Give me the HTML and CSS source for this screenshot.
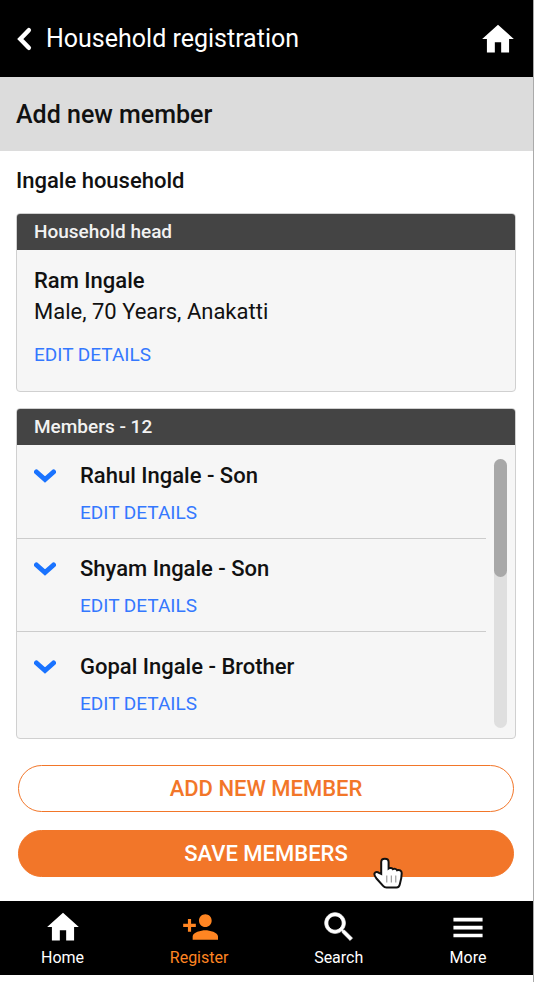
FILE: index.html
```html
<!DOCTYPE html>
<html lang="en">
<head>
<meta charset="utf-8">
<meta name="viewport" content="width=device-width, initial-scale=1">
<title>Household registration</title>
<link rel="stylesheet" href="styles.css">
</head>
<body>
<div class="app">
  <header class="topbar">
    <button class="icon-button" type="button" aria-label="Back">
      <svg class="back-icon" viewBox="0 0 16 24" aria-hidden="true"><path d="M12.800 3.200 4.300 12l8.500 8.800"/></svg>
    </button>
    <h1 class="topbar-title">Household registration</h1>
    <a class="icon-button" href="#home" aria-label="Home">
      <svg class="icon" viewBox="0 0 24 24" aria-hidden="true"><path d="M10 20.500v-6.500h4v6.500h5v-8.500h3L12 3 2 12h3v8.500z"/></svg>
    </a>
  </header>

  <div class="subheader"><h2 class="subheader-title">Add new member</h2></div>

  <main class="content">
    <h3 class="household">Ingale household</h3>

    <section class="card">
      <h4 class="card-header">Household head</h4>
      <div class="head-body">
        <p class="name">Ram Ingale</p>
        <p class="details">Male, 70 Years, Anakatti</p>
        <a class="edit" href="#edit-head">EDIT DETAILS</a>
      </div>
    </section>

    <section class="card">
      <h4 class="card-header">Members - 12</h4>
      <div class="members-body">
        <ul class="members">
          <li class="member">
            <button class="icon-button" type="button" aria-label="Expand Rahul Ingale"><svg class="chevron" viewBox="0 0 22 14" aria-hidden="true"><path d="M2.500 3 11 10.500 19.500 3"/></svg></button>
            <p class="name">Rahul Ingale - Son</p>
            <a class="edit" href="#edit-rahul">EDIT DETAILS</a>
          </li>
          <li class="member">
            <button class="icon-button" type="button" aria-label="Expand Shyam Ingale"><svg class="chevron" viewBox="0 0 22 14" aria-hidden="true"><path d="M2.500 3 11 10.500 19.500 3"/></svg></button>
            <p class="name">Shyam Ingale - Son</p>
            <a class="edit" href="#edit-shyam">EDIT DETAILS</a>
          </li>
          <li class="member">
            <button class="icon-button" type="button" aria-label="Expand Gopal Ingale"><svg class="chevron" viewBox="0 0 22 14" aria-hidden="true"><path d="M2.500 3 11 10.500 19.500 3"/></svg></button>
            <p class="name">Gopal Ingale - Brother</p>
            <a class="edit" href="#edit-gopal">EDIT DETAILS</a>
          </li>
        </ul>
        <div class="scroll-track" aria-hidden="true"><div class="scroll-thumb"></div></div>
      </div>
    </section>

    <div class="actions">
      <button class="button button-outline" type="button">ADD NEW MEMBER</button>
      <button class="button button-solid" type="button">SAVE MEMBERS
        <svg class="pointer" viewBox="0 0 30 32" aria-hidden="true"><path d="M8.200 17V5.200C8.200 .7 15.600 .7 15.600 5.200V11.500c1.200-.9 3.600-.7 4.300.6 1.400-.7 3.500-.2 4.100 1.100 2.200-.6 4.700.3 4.700 2.800 0 4-.7 7.200-1.700 10.500-.5 2.500-1.500 4.100-3.500 4.100H13.500c-1.400 0-2.400-.5-3.400-1.700L3.500 21.500C1.600 19.200 1 17.500 1.600 16.300c.9-1.700 3-1.500 4.400-.4z"/><path class="pointer-lines" d="M13.800 18.500v7M18.300 18.500v7M22.800 18.500v7"/></svg>
      </button>
    </div>
  </main>

  <nav class="tabs" aria-label="Main">
    <a class="tab" href="#home"><svg class="icon" viewBox="0 0 24 24" aria-hidden="true"><path d="M10 20.500v-6.500h4v6.500h5v-8.500h3L12 3 2 12h3v8.500z"/></svg>Home</a>
    <a class="tab tab-active" href="#register" aria-current="page"><svg class="icon" viewBox="-1 0 24 24" aria-hidden="true"><path d="M15 12c2.210 0 4-1.790 4-4s-1.790-4-4-4-4 1.790-4 4 1.790 4 4 4zm-9-2V7H4v3H1v2h3v3h2v-3h3v-2H6zm9 4c-2.670 0-8 1.340-8 4v2h16v-2c0-2.660-5.330-4-8-4z"/></svg>Register</a>
    <a class="tab" href="#search"><svg class="icon icon-bold" viewBox="0 0 24 24" aria-hidden="true"><path d="M15.500 14h-.79l-.28-.27C15.410 12.590 16 11.110 16 9.500 16 5.910 13.090 3 9.500 3S3 5.910 3 9.500 5.910 16 9.500 16c1.610 0 3.090-.59 4.230-1.570l.27.28v.79l5 4.990L20.490 19l-4.990-5zm-6 0C7.010 14 5 11.990 5 9.500S7.010 5 9.500 5 14 7.010 14 9.500 11.990 14 9.500 14z"/></svg>Search</a>
    <a class="tab" href="#more"><svg class="icon" viewBox="0 0 24 24" aria-hidden="true"><path d="M2.800 6.200h18.400v2.300H2.800zM2.800 11.200h18.400v2.300H2.800zM2.800 16.200h18.400v2.300H2.800z"/></svg>More</a>
  </nav>
</div>
</body>
</html>
```
FILE: styles.css
```css
* {
  box-sizing: border-box;
}

body {
  margin: 0;
  background: #fff;
  color: #111;
  font-family: Roboto, "Liberation Sans", sans-serif;
  font-size: 22px;
}

h1, h2, h3, h4, p, ul {
  margin: 0;
  padding: 0;
  font-weight: 500;
}

a {
  color: inherit;
  text-decoration: none;
}

button {
  font: inherit;
}

.app {
  min-height: 100vh;
  border-right: 1px solid #aaa;
}

.icon-button {
  display: flex;
  align-items: center;
  padding: 0;
  border: 0;
  background: none;
}

.icon {
  display: block;
  width: 38px;
  height: 38px;
  fill: currentColor;
}

.icon-bold {
  stroke: currentColor;
  stroke-width: 0.5;
}

.topbar {
  display: flex;
  align-items: center;
  gap: 14px;
  height: 77px;
  padding: 0 16px;
  background: #000;
  color: #fff;
}

.topbar-title {
  flex: 1;
  font-size: 25px;
  font-weight: 400;
}

.back-icon {
  width: 16px;
  height: 24px;
  fill: none;
  stroke: #fff;
  stroke-width: 4.5;
  stroke-linecap: round;
}

.subheader {
  display: flex;
  align-items: center;
  height: 74px;
  padding: 0 16px;
  background: #dcdcdc;
}

.subheader-title {
  font-size: 25px;
}

.content {
  display: flex;
  flex-direction: column;
  gap: 16px;
  padding: 14px 17px 24px 16px;
}

.household {
  font-size: 22px;
  line-height: 32px;
}

.card {
  overflow: hidden;
  border: 1px solid #d0d0d0;
  border-radius: 4px;
  background: #f6f6f6;
}

.card-header {
  padding-left: 17px;
  background: #444;
  color: #f2f2f2;
  font-size: 19px;
  line-height: 36px;
}

.head-body {
  padding: 15px 17px 21px;
  line-height: 31px;
}

.details {
  font-weight: 400;
}

.edit {
  display: block;
  color: #3478ff;
  font-size: 19px;
  font-weight: 400;
}

.head-body .edit {
  margin-top: 12px;
}

.members-body {
  display: flex;
  gap: 8px;
  padding-right: 8px;
}

.members {
  flex: 1;
  list-style: none;
}

.member {
  display: grid;
  grid-template-columns: 46px 1fr;
  row-gap: 6px;
  padding: 15px 17px 10px;
  line-height: 31px;
}

.member + .member {
  padding-top: 14px;
  border-top: 1px solid #ccc;
}

.member:last-child {
  padding-top: 19px;
  padding-bottom: 19px;
}

.member .edit {
  grid-column: 2;
}

.chevron {
  width: 22px;
  height: 14px;
  fill: none;
  stroke: #1a73ff;
  stroke-width: 5;
  stroke-linecap: round;
}

.scroll-track {
  width: 13px;
  margin: 14px 0 10px;
  border-radius: 7px;
  background: #dfdfdf;
}

.scroll-thumb {
  height: 44%;
  border-radius: 7px;
  background: #a8a8a8;
}

.actions {
  display: flex;
  flex-direction: column;
  gap: 18px;
  padding: 10px 2px 0;
}

.button {
  position: relative;
  height: 47px;
  padding: 0;
  border: 1px solid #f27629;
  border-radius: 24px;
  font-weight: 500;
}

.button-outline {
  background: #fff;
  color: #f27629;
}

.button-solid {
  background: #f27629;
  color: #fff;
}

.pointer {
  position: absolute;
  right: 110px;
  bottom: -13px;
  width: 30px;
  height: 32px;
  fill: #fff;
  stroke: #111;
  stroke-width: 2;
}

.pointer .pointer-lines {
  stroke: #888;
  stroke-width: 1;
}

.tabs {
  display: flex;
  justify-content: space-between;
  padding: 7px 46px 5px 41px;
  background: #000;
  color: #fff;
  font-size: 16px;
}

.tab {
  display: flex;
  flex-direction: column;
  align-items: center;
  line-height: 24px;
}

.tab-active {
  color: #ff8522;
}
```
